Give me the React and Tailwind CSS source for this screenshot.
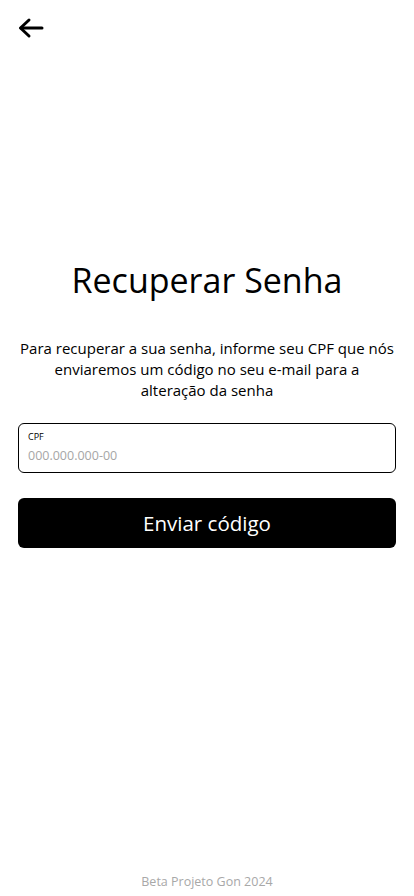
import React from "react";

export default function App() {
  return (
    <div className="flex h-[896px] w-full flex-col bg-white text-black">
      <div className="flex flex-col px-[18px] pt-[17px]">
        <button className="h-[22px] w-[26px]">
          <svg width="26" height="22" viewBox="0 0 26 22" fill="none" stroke="black" strokeWidth="3" strokeLinecap="round" strokeLinejoin="round">
            <path d="M24 11H3" />
            <path d="M11 3L2.5 11L11 19" />
          </svg>
        </button>
      </div>
      <div className="flex flex-1 flex-col px-[18px] font-['Open_Sans',sans-serif]">
        <h1 className="mt-[219px] text-center text-[34px] leading-[44px] text-black">Recuperar Senha</h1>
        <p className="mt-[36px] text-center text-[15px] leading-[21px] text-black">
          Para recuperar a sua senha, informe seu CPF que nós
          <br />
          enviaremos um código no seu e-mail para a
          <br />
          alteração da senha
        </p>
        <div className="mt-[22px] flex h-[50px] flex-col rounded-[6px] border border-black px-[9px] pt-[7px]">
          <label className="text-[9px] leading-[12px]">CPF</label>
          <input className="mt-[5px] w-full text-[12.5px] leading-[16px] outline-none placeholder:text-[#a6a6a6]" placeholder="000.000.000-00" />
        </div>
        <button className="mt-[25px] flex h-[50px] items-center justify-center rounded-[6px] bg-black text-[20.5px] text-white">
          Enviar código
        </button>
      </div>
      <div className="pb-[5px] text-center font-['Open_Sans',sans-serif] text-[12.5px] leading-[18px] text-[#a8a8a8]">
        Beta Projeto Gon 2024
      </div>
    </div>
  );
}
